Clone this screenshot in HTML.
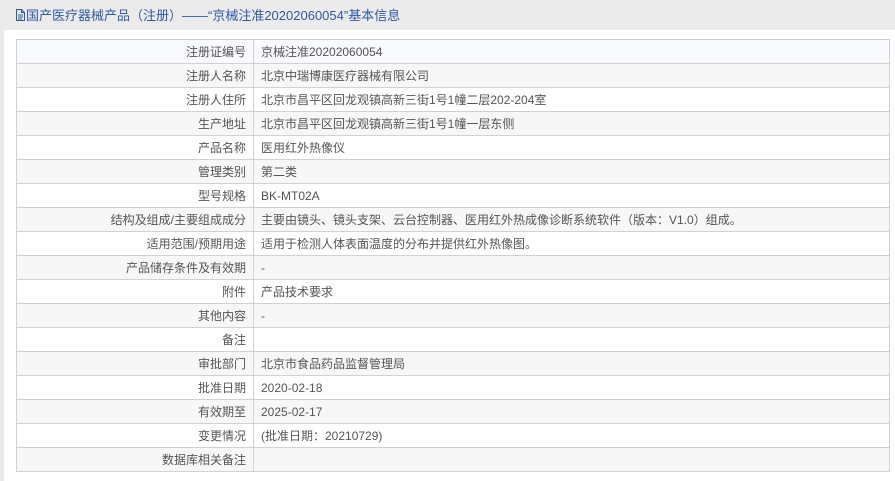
<!DOCTYPE html>
<html><head><meta charset="utf-8"><style>
*{margin:0;padding:0;box-sizing:border-box}
body{width:895px;height:481px;background:#ebebeb;font-family:"Liberation Sans","Noto Sans CJK SC",sans-serif;overflow:hidden;position:relative}
.hd{position:absolute;left:15px;top:7px;font-size:13px;color:#2e5aa8;line-height:17px;white-space:nowrap}
.panel{position:absolute;left:4px;top:30px;right:0;bottom:0;background:#fff}
table{position:absolute;left:16px;top:39px;width:874px;border-collapse:collapse;font-size:12px;color:#555}
td{border:1px solid #d2d2d2;height:24px;padding:0 7px;white-space:nowrap}
td.l{width:237px;text-align:right}
tr:nth-child(even){background:#f7f7f7}
tr:first-child{background:#f8fafe}
</style></head><body>
<div class="hd"><svg width="11" height="12" viewBox="0 0 11 12" style="vertical-align:-1px"><path d="M1.5 .5h5l3 3v8h-8z M6.5 .5v3h3 M3 6h5 M3 8h5 M3 10h4" fill="none" stroke="#2e5aa8"/></svg>国产医疗器械产品（注册）——“京械注准20202060054”基本信息</div>
<div class="panel"></div>
<table>
<tr><td class="l">注册证编号</td><td>京械注准20202060054</td></tr>
<tr><td class="l">注册人名称</td><td>北京中瑞博康医疗器械有限公司</td></tr>
<tr><td class="l">注册人住所</td><td>北京市昌平区回龙观镇高新三街1号1幢二层202-204室</td></tr>
<tr><td class="l">生产地址</td><td>北京市昌平区回龙观镇高新三街1号1幢一层东侧</td></tr>
<tr><td class="l">产品名称</td><td>医用红外热像仪</td></tr>
<tr><td class="l">管理类别</td><td>第二类</td></tr>
<tr><td class="l">型号规格</td><td>BK-MT02A</td></tr>
<tr><td class="l">结构及组成/主要组成成分</td><td>主要由镜头、镜头支架、云台控制器、医用红外热成像诊断系统软件（版本：V1.0）组成。</td></tr>
<tr><td class="l">适用范围/预期用途</td><td>适用于检测人体表面温度的分布并提供红外热像图。</td></tr>
<tr><td class="l">产品储存条件及有效期</td><td>-</td></tr>
<tr><td class="l">附件</td><td>产品技术要求</td></tr>
<tr><td class="l">其他内容</td><td>-</td></tr>
<tr><td class="l">备注</td><td></td></tr>
<tr><td class="l">审批部门</td><td>北京市食品药品监督管理局</td></tr>
<tr><td class="l">批准日期</td><td>2020-02-18</td></tr>
<tr><td class="l">有效期至</td><td>2025-02-17</td></tr>
<tr><td class="l">变更情况</td><td>(批准日期：20210729)</td></tr>
<tr><td class="l">数据库相关备注</td><td></td></tr>
</table>
</body></html>
